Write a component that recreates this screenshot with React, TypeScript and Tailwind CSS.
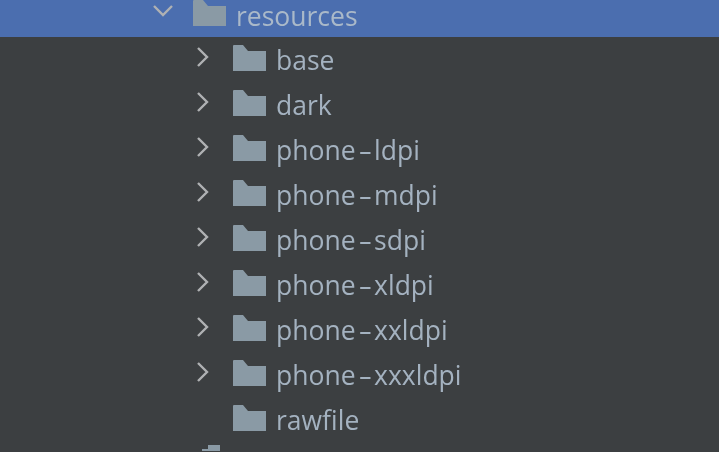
const folders = [
  "base",
  "dark",
  "phone-ldpi",
  "phone-mdpi",
  "phone-sdpi",
  "phone-xldpi",
  "phone-xxldpi",
  "phone-xxxldpi",
];

const FolderIcon = () => (
  <svg width="33" height="26" viewBox="0 0 33 26" className="shrink-0">
    <path d="M0 1 Q0 0 1 0 H10 L15 6 H33 V26 H0 Z" fill="#8a9aa5" />
  </svg>
);

const Chevron = ({ open }: { open?: boolean }) => (
  <svg width="20" height="20" viewBox="0 0 20 20" fill="none" stroke="#afb1b3" strokeWidth="2.4" className="shrink-0">
    {open ? <path d="M1 3 L10 12 L19 3" /> : <path d="M4 1 L13 10 L4 19" />}
  </svg>
);

// the hyphen is wider in the screenshot's font
const Label = ({ name, className }: { name: string; className: string }) => {
  const [head, tail] = name.split("-");
  return (
    <span className={`text-[26.5px] leading-none ${className}`}>
      {head}
      {tail && <span className="mx-[5px] inline-block scale-x-[1.6]">-</span>}
      {tail}
    </span>
  );
};

const Row = ({ name, arrow }: { name: string; arrow: boolean }) => (
  <div className="flex h-[45px] items-center pl-[194px]">
    <div className="w-[39px] shrink-0 pb-[5px]">{arrow && <Chevron />}</div>
    <div className="mb-[3px]">
      <FolderIcon />
    </div>
    <Label name={name} className="ml-[10px] mt-[2px] text-[#a4b2c0]" />
  </div>
);

export default function App() {
  return (
    <div
      className="h-[452px] w-[719px] overflow-hidden bg-[#3c3f41]"
      style={{ fontFamily: '"Open Sans", "Noto Sans", sans-serif' }}
    >
      <div className="blur-[0.5px]">
        <div className="flex h-[37px] items-end bg-[#4b6eaf] pb-[8px] pl-[153px]">
          <div className="mb-[6px] w-[40px] shrink-0">
            <Chevron open />
          </div>
          <div className="mb-[3px] self-end">
            <FolderIcon />
          </div>
          <Label name="resources" className="ml-[10px] text-[#aab9c9]" />
        </div>
        {folders.map((name) => (
          <Row key={name} name={name} arrow />
        ))}
        <Row name="rawfile" arrow={false} />
        <div className="ml-[202px] mt-[3px]">
          <svg width="18" height="6" viewBox="0 0 18 6" className="block">
            <path d="M0 4 H6 V0 H18 V6 H0 Z" fill="#8a9aa5" />
          </svg>
        </div>
      </div>
    </div>
  );
}
